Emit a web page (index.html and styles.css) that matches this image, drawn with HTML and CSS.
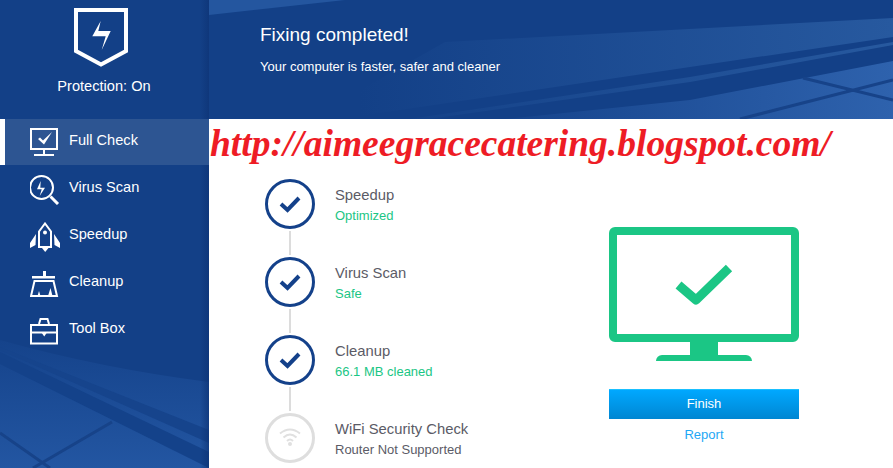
FILE: index.html
```html
<!DOCTYPE html>
<html lang="en">
<head>
    <meta charset="UTF-8">
    <title>Fixing completed</title>
    <link rel="stylesheet" href="styles.css">
</head>
<body>

    <div class="app">
        <div class="sidebar">
            <svg class="side-bg" viewBox="0 0 209 468" width="209" height="468">
                <defs>
                    <linearGradient id="sideFade" x1="0" y1="0" x2="0" y2="1">
                        <stop offset="0" stop-color="#15438b"/>
                        <stop offset="1" stop-color="#2356a2"/>
                    </linearGradient>
                    <linearGradient id="sideEdge" x1="0" y1="0" x2="1" y2="0">
                        <stop offset="0" stop-color="#0d3375" stop-opacity="0"/>
                        <stop offset="1" stop-color="#0d3375" stop-opacity="0.7"/>
                    </linearGradient>
                </defs>
                <path d="M0 340Q100 368 209 382V468H0Z" fill="url(#sideFade)"/>
                <polygon points="0,347 209,430 209,443 0,350" fill="#16448c"/>
                <polygon points="0,352 209,452 209,468 0,364" fill="#14428a"/>
                <path d="M0 433L50 468M112 422L33 468" stroke="#174389" stroke-width="3" fill="none"/>
                <rect x="200" y="0" width="9" height="468" fill="url(#sideEdge)"/>
            </svg>

            <div class="logo">
                <svg width="54" height="59" viewBox="0 0 54 59">
                    <path d="M2 2H52V43L27 56.500L2 43Z" fill="none" stroke="#fff" stroke-width="4"/>
                    <path d="M26.700 13L18.300 28.300H31.700L27.700 42L36.700 23H24.300Z" fill="#fff"/>
                </svg>
                <div class="logo-text">Protection: On</div>
            </div>

            <div class="nav-item active">
                <svg class="nav-icon" width="30" height="30" viewBox="0 0 30 30">
                    <rect x="1" y="2" width="26" height="20" fill="none" stroke="#fff" stroke-width="2"/>
                    <path d="M8 12L10 10.500L13 13.500L22 5L14 17.500Z" fill="#fff"/>
                    <path d="M13 23H15V27H13ZM4 27H24V29H4Z" fill="#fff"/>
                </svg>
                <span>Full Check</span>
            </div>
            <div class="nav-item">
                <svg class="nav-icon" width="30" height="30" viewBox="1 0 30 30">
                    <circle cx="12.500" cy="12.500" r="11.500" fill="none" stroke="#fff" stroke-width="2"/>
                    <path d="M11.700 6L8 14.300H12.700L10.700 21L16 12.700H11.300Z" fill="#fff"/>
                    <path d="M21.500 21.500L29 29" stroke="#fff" stroke-width="3"/>
                </svg>
                <span>Virus Scan</span>
            </div>
            <div class="nav-item">
                <svg class="nav-icon" width="30" height="30" viewBox="0 0 30 30">
                    <path d="M9 9.500L15 1.500L21 9.500V25H9Z" fill="none" stroke="#fff" stroke-width="2"/>
                    <circle cx="15" cy="10.500" r="2" fill="#fff"/>
                    <path d="M6 12L0 21V26L5.500 23ZM24 12L30 21V26L24.500 23ZM12 26H18.500L15.200 30Z" fill="#fff"/>
                </svg>
                <span>Speedup</span>
            </div>
            <div class="nav-item">
                <svg class="nav-icon" width="30" height="30" viewBox="0 0 30 30">
                    <path d="M13 2H16V7H25V9.500H2V7H13Z" fill="#fff"/>
                    <path d="M4.500 12H23.500L27 27H1Z" fill="none" stroke="#fff" stroke-width="2"/>
                    <path d="M7.500 27L9 22L10.500 27ZM18 27L20.500 19L22.500 27Z" fill="#fff"/>
                </svg>
                <span>Cleanup</span>
            </div>
            <div class="nav-item">
                <svg class="nav-icon" width="30" height="30" viewBox="0 0 30 30">
                    <rect x="1" y="9" width="26" height="18.500" fill="none" stroke="#fff" stroke-width="2"/>
                    <path d="M1 16.500H27M9 8L10.500 3H17.500L19 8" fill="none" stroke="#fff" stroke-width="2"/>
                    <path d="M11.500 16.500H17L14.200 20.500Z" fill="#fff"/>
                </svg>
                <span>Tool Box</span>
            </div>
        </div>

        <div class="main">
            <div class="banner">
                <svg class="banner-bg" viewBox="0 0 684 119" width="684" height="119">
                    <defs>
                        <linearGradient id="bandFade" gradientUnits="userSpaceOnUse" x1="150" y1="0" x2="684" y2="0">
                            <stop offset="0" stop-color="#134087"/>
                            <stop offset="1" stop-color="#27599f"/>
                        </linearGradient>
                        <linearGradient id="cornerFade" gradientUnits="userSpaceOnUse" x1="296" y1="0" x2="684" y2="0">
                            <stop offset="0" stop-color="#16448c"/>
                            <stop offset="1" stop-color="#2e62ad"/>
                        </linearGradient>
                    </defs>
                    <polygon points="0,0 136,0 0,15" fill="#24569f"/>
                    <polygon points="236,42 684,18 684,37 130,119 100,119" fill="url(#bandFade)"/>
                    <polygon points="684,42 684,45 481,82 220,119 200,119 481,77" fill="url(#bandFade)"/>
                    <polygon points="684,61 481,100 296,119 684,119" fill="url(#cornerFade)"/>
                    <path d="M594 78L684 100M531 119L684 80" stroke="#174389" stroke-width="3" fill="none"/>
                </svg>
                <h1>Fixing completed!</h1>
                <p>Your computer is faster, safer and cleaner</p>
            </div>

            <div class="url">http://aimeegracecatering.blogspot.com/</div>

            <div class="content">
                <div class="steps">
                    <div class="step">
                        <div class="step-mark">
                            <svg width="50" height="50" viewBox="0 0 50 50">
                                <circle cx="25" cy="25" r="23.500" fill="none" stroke="#14418a" stroke-width="3"/>
                                <path d="M16 25L22.500 31L34 19" fill="none" stroke="#14418a" stroke-width="4"/>
                            </svg>
                            <div class="line"></div>
                        </div>
                        <div class="step-text">
                            <div class="step-title">Speedup</div>
                            <div class="step-sub">Optimized</div>
                        </div>
                    </div>
                    <div class="step">
                        <div class="step-mark">
                            <svg width="50" height="50" viewBox="0 0 50 50">
                                <circle cx="25" cy="25" r="23.500" fill="none" stroke="#14418a" stroke-width="3"/>
                                <path d="M16 25L22.500 31L34 19" fill="none" stroke="#14418a" stroke-width="4"/>
                            </svg>
                            <div class="line"></div>
                        </div>
                        <div class="step-text">
                            <div class="step-title">Virus Scan</div>
                            <div class="step-sub">Safe</div>
                        </div>
                    </div>
                    <div class="step">
                        <div class="step-mark">
                            <svg width="50" height="50" viewBox="0 0 50 50">
                                <circle cx="25" cy="25" r="23.500" fill="none" stroke="#14418a" stroke-width="3"/>
                                <path d="M16 25L22.500 31L34 19" fill="none" stroke="#14418a" stroke-width="4"/>
                            </svg>
                            <div class="line"></div>
                        </div>
                        <div class="step-text">
                            <div class="step-title">Cleanup</div>
                            <div class="step-sub">66.1 MB cleaned</div>
                        </div>
                    </div>
                    <div class="step">
                        <div class="step-mark">
                            <svg width="50" height="50" viewBox="0 0 50 50">
                                <circle cx="25" cy="25" r="23.500" fill="none" stroke="#dedede" stroke-width="3"/>
                                <path d="M15 20.500Q25 12.500 35 20.500M18.500 24.500Q25 18.500 31.500 24.500M22 28Q25 25 28 28" fill="none" stroke="#e0e0e0" stroke-width="2"/>
                                <circle cx="25" cy="31" r="2" fill="#e0e0e0"/>
                            </svg>
                        </div>
                        <div class="step-text">
                            <div class="step-title">WiFi Security Check</div>
                            <div class="step-sub gray">Router Not Supported</div>
                        </div>
                    </div>
                </div>

                <div class="result">
                    <svg width="190" height="134" viewBox="0 0 190 134">
                        <path fill-rule="evenodd" d="M6 0H184A6 6 0 0 1 190 6V109A6 6 0 0 1 184 115H6A6 6 0 0 1 0 109V6A6 6 0 0 1 6 0ZM8 8V107H182V8Z" fill="#1bc685"/>
                        <path d="M81 115H109V128H81ZM47 134A6 6 0 0 1 53 128H137A6 6 0 0 1 143 134Z" fill="#1bc685"/>
                        <path d="M69.500 58L87 73L120 41" fill="none" stroke="#1bc685" stroke-width="9" stroke-linejoin="round"/>
                    </svg>
                    <div class="finish">Finish</div>
                    <div class="report">Report</div>
                </div>
            </div>
        </div>
    </div>

</body>
</html>
```

FILE: styles.css
```css
body {
    margin: 0;
    font-family: "Liberation Sans", Arial, sans-serif;
    background: #fff;
    overflow: hidden;
}

.app {
    display: flex;
    width: 893px;
    height: 468px;
    overflow: hidden;
}

.sidebar {
    position: relative;
    width: 209px;
    flex-shrink: 0;
    background: #134087;
    color: #fff;
}

.side-bg {
    position: absolute;
    left: 0;
    top: 0;
}

.logo {
    position: relative;
    height: 119px;
    box-sizing: border-box;
    padding-top: 8px;
    text-align: center;
}

.logo svg {
    display: block;
    margin-left: 74px;
}

.logo-text {
    margin-top: 10px;
    font-size: 14.6px;
    line-height: 18px;
    padding-right: 1px;
}

.nav-item {
    position: relative;
    display: flex;
    align-items: center;
    height: 47px;
    padding-left: 30px;
    font-size: 14.6px;
}

.nav-item span {
    padding-bottom: 5px;
}

.nav-item.active {
    height: 46px;
    margin-bottom: 1px;
    background: #2d5592;
    border-left: 5px solid #fff;
    padding-left: 25px;
}

.nav-icon {
    margin-right: 9px;
    flex-shrink: 0;
}

.main {
    flex: 1;
    display: flex;
    flex-direction: column;
}

.banner {
    position: relative;
    flex-shrink: 0;
    height: 119px;
    box-sizing: border-box;
    padding: 24px 0 0 51px;
    background: #134087;
    color: #fff;
}

.banner-bg {
    position: absolute;
    left: 0;
    top: 0;
}

.banner h1 {
    position: relative;
    margin: 0;
    font-size: 19px;
    font-weight: normal;
    line-height: 22px;
}

.banner p {
    position: relative;
    margin: 14px 0 0;
    font-size: 13px;
    line-height: 14px;
}

.url {
    flex-shrink: 0;
    height: 50px;
    padding-left: 1px;
    font-family: "Liberation Serif", serif;
    font-style: italic;
    font-weight: bold;
    font-size: 37.5px;
    line-height: 50px;
    color: #ee1c25;
    white-space: nowrap;
}

.content {
    display: flex;
    flex: 1;
    padding-left: 56px;
}

.steps {
    width: 344px;
    padding-top: 10px;
}

.step {
    display: flex;
    height: 78px;
}

.step-mark {
    display: flex;
    flex-direction: column;
    align-items: center;
    width: 50px;
    margin-right: 20px;
}

.step-mark svg {
    display: block;
    flex-shrink: 0;
}

.line {
    width: 2px;
    height: 24px;
    margin-top: 2px;
    background: #dcdcdc;
}

.step-text {
    padding-top: 7px;
}

.step-title {
    font-size: 14.8px;
    line-height: 18px;
    color: #5b5b66;
}

.step-sub {
    margin-top: 5px;
    font-size: 13px;
    line-height: 14px;
    color: #1bc685;
}

.step-sub.gray {
    color: #5b5b66;
}

.result {
    display: flex;
    flex-direction: column;
    width: 190px;
    padding-top: 58px;
}

.result svg {
    display: block;
}

.finish {
    height: 29px;
    margin-top: 28px;
    border-top: 1px solid #1ac0ff;
    background: linear-gradient(#00a8ff, #0086d2);
    color: #fff;
    font-size: 13px;
    line-height: 28px;
    text-align: center;
}

.report {
    margin-top: 9px;
    font-size: 13px;
    line-height: 14px;
    color: #1ea7f5;
    text-align: center;
}
```
